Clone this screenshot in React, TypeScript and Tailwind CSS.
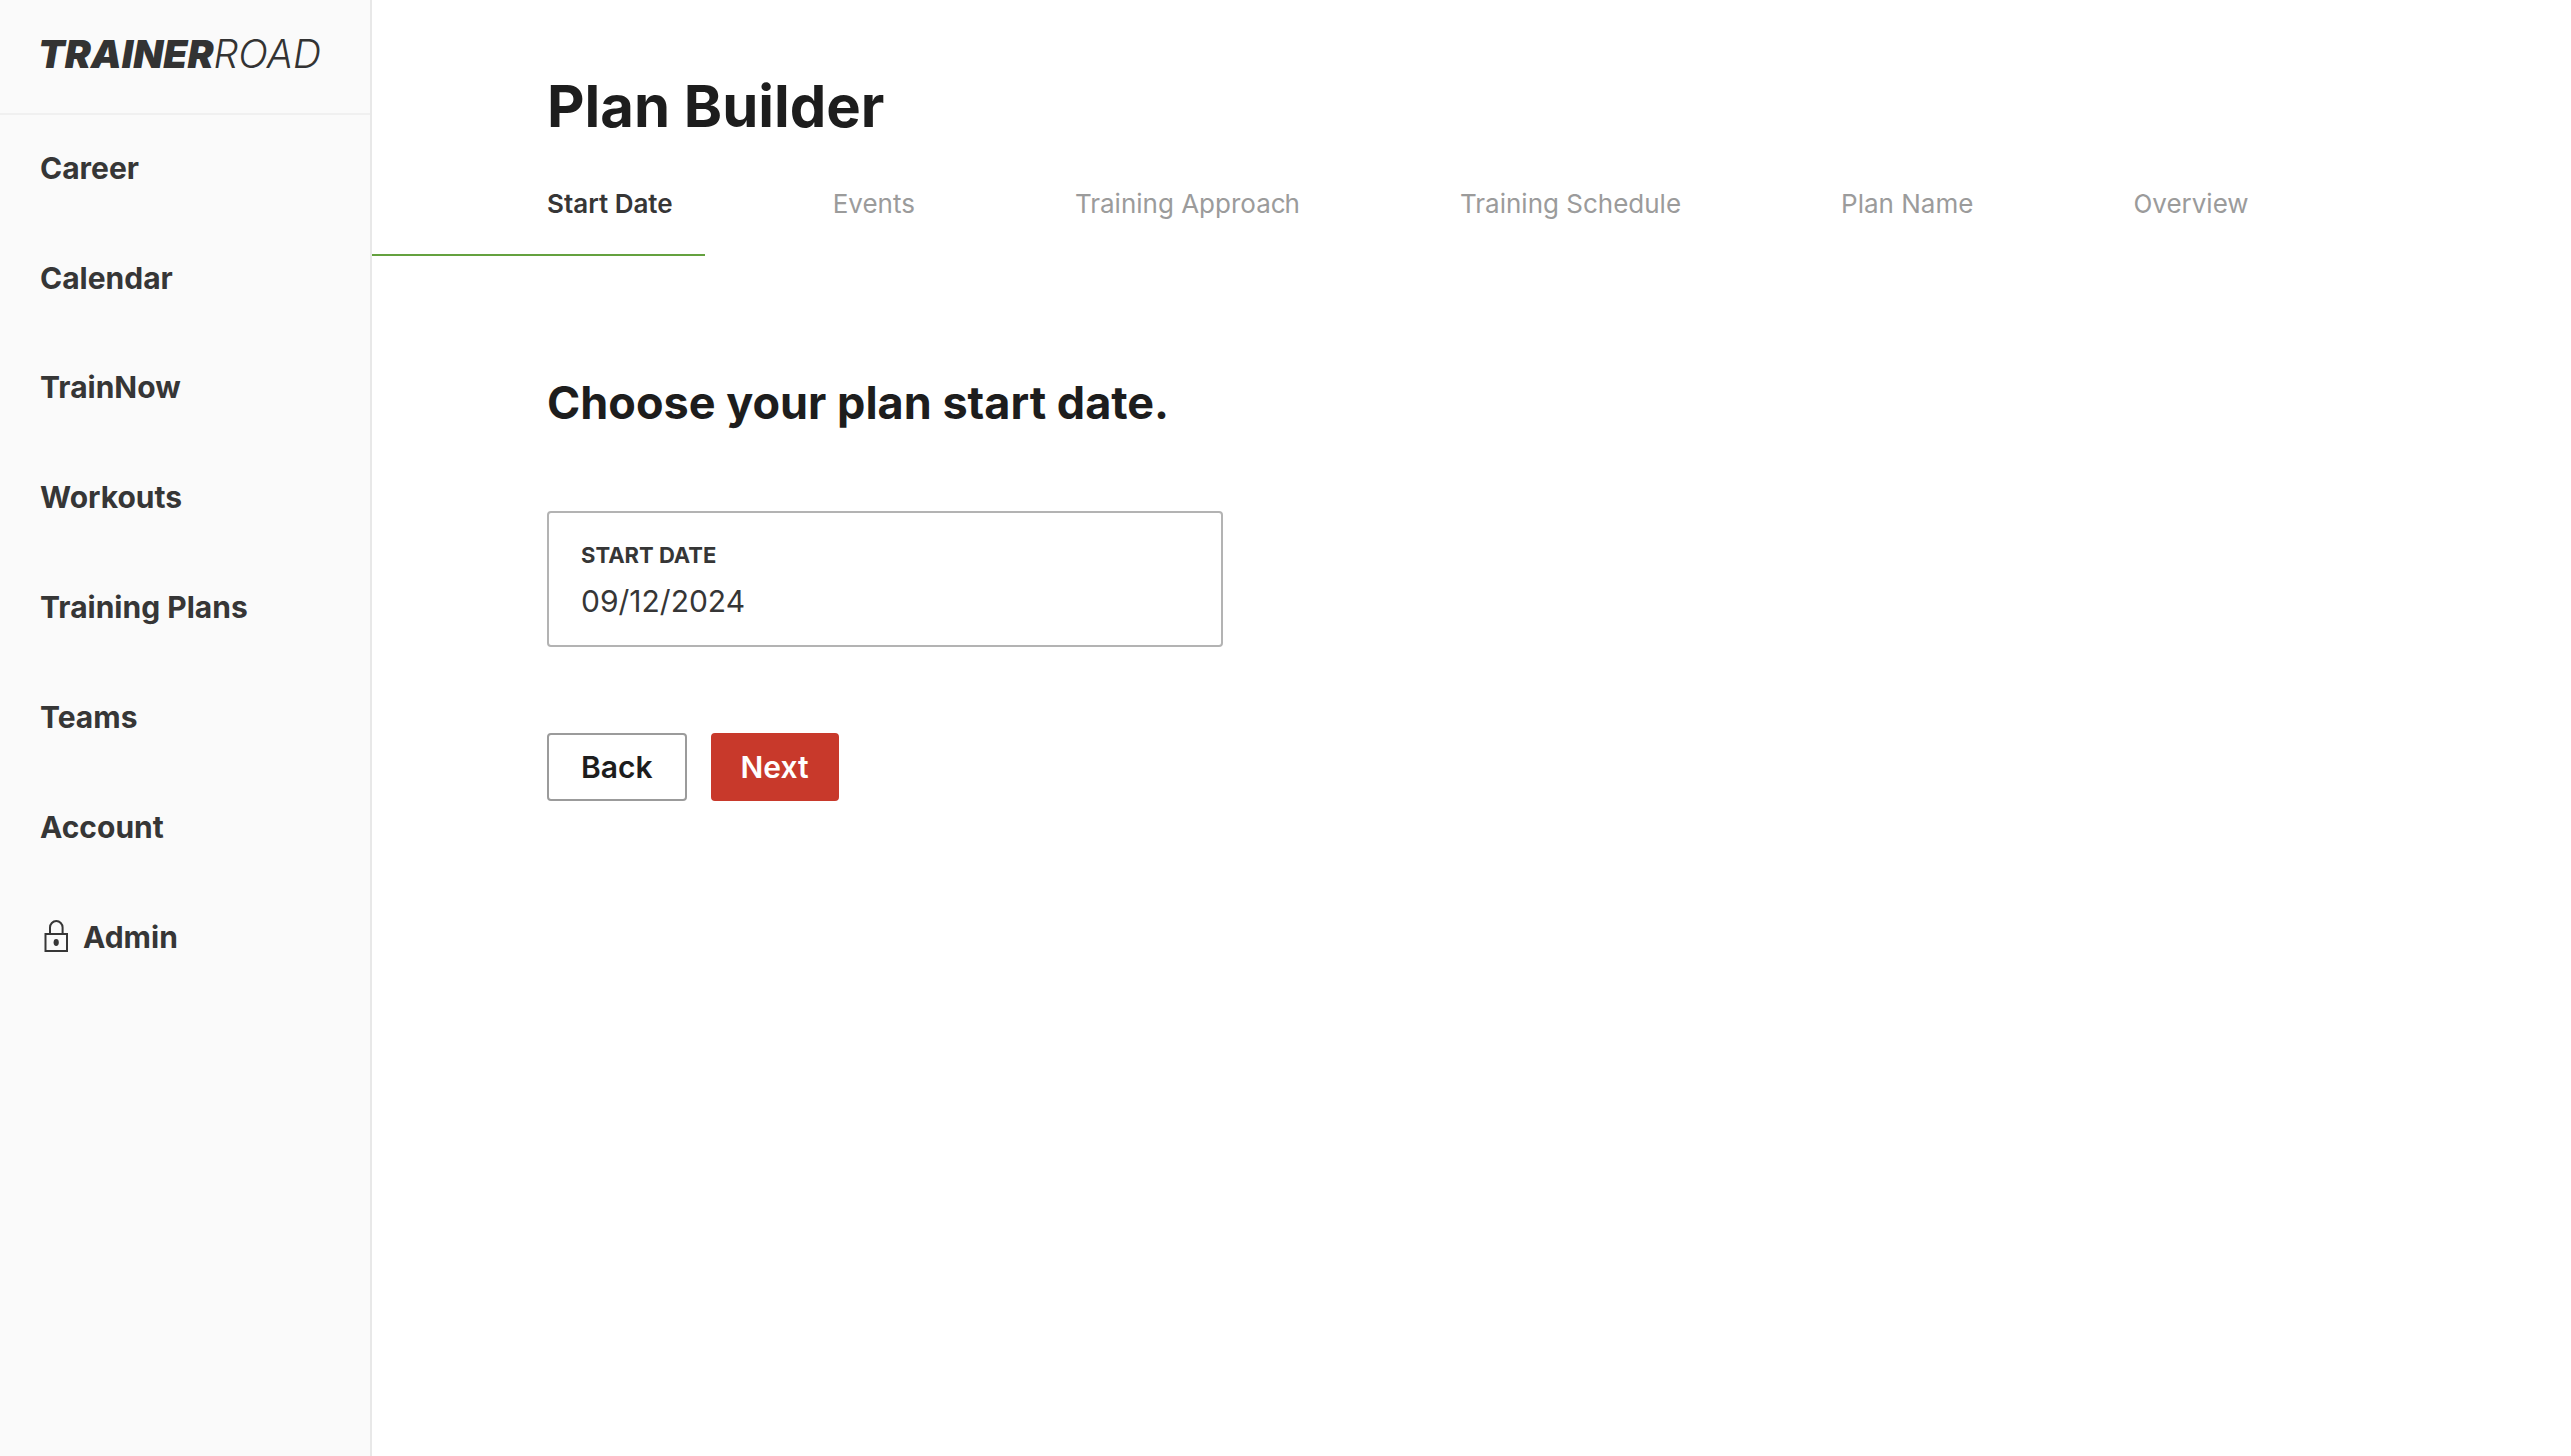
import { useState } from "react";

const links = [
  "Career",
  "Calendar",
  "TrainNow",
  "Workouts",
  "Training Plans",
  "Teams",
  "Account",
];

const steps = [
  "Start Date",
  "Events",
  "Training Approach",
  "Training Schedule",
  "Plan Name",
  "Overview",
];

function LockIcon() {
  return (
    <svg width="32" height="34" viewBox="0 0 32 34" fill="none" stroke="currentColor" strokeWidth="2" aria-hidden="true">
      <path d="M10 14V7.4a6.3 6.3 0 0 1 12.6 0V14" />
      <rect x="5.5" y="14" width="21.5" height="17" />
      <ellipse cx="16.2" cy="22.5" rx="2.6" ry="3.4" fill="currentColor" stroke="none" />
    </svg>
  );
}

function Sidebar() {
  return (
    <aside className="w-[372px] shrink-0 border-r-2 border-[#e8e8e8] bg-[#fafafa] text-[#363636]">
      <div className="flex h-[115px] border-b-2 border-[#f0f0f0] pt-7 pl-[38px]">
        <a href="#" className="text-[39px] leading-[52px] italic text-[#333333]">
          <span className="font-black">TRAINER</span>
          <span className="font-light">ROAD</span>
        </a>
      </div>
      <nav className="-mt-0.5 text-[30px] leading-10 font-bold">
        {links.map((link) => (
          <a key={link} href="#" className="flex h-[110px] items-center pl-10">
            {link}
          </a>
        ))}
        <a href="#" className="flex h-[110px] items-center gap-[11px] pl-10">
          <LockIcon />
          Admin
        </a>
      </nav>
    </aside>
  );
}

export default function App() {
  const [step, setStep] = useState("Start Date");
  const [startDate, setStartDate] = useState("09/12/2024");

  return (
    <div className="flex min-h-screen bg-white font-['Inter',sans-serif]">
      <Sidebar />
      <main className="min-w-0 flex-1 text-[#1d1d1d]">
        <h1 className="pt-[74px] pl-44 text-[58px] leading-[64px] font-bold">Plan Builder</h1>
        <div className="mt-[46px] flex gap-40 pb-[30px] pl-44 text-[26px] leading-10">
          {steps.map((name) => (
            <button
              key={name}
              type="button"
              onClick={() => setStep(name)}
              className={name === step ? "font-semibold text-[#363636]" : "text-[#9b9b9b]"}
            >
              {name}
            </button>
          ))}
        </div>
        <div className="h-0.5 w-[334px] bg-[#64a13f]" />

        <form className="pt-[120px] pl-44" onSubmit={(e) => e.preventDefault()}>
          <h2 className="text-[45px] leading-[56px] font-bold">Choose your plan start date.</h2>
          <div className="mt-20 w-full max-w-[676px] rounded border-2 border-[#b3b3b3] px-8 pt-7 pb-6 text-[#363636]">
            <label htmlFor="startDate" className="block text-[22px] leading-7 font-bold">
              START DATE
            </label>
            <input
              id="startDate"
              type="text"
              value={startDate}
              onChange={(e) => setStartDate(e.target.value)}
              className="mt-3 block h-10 w-full text-[30px] leading-10 outline-none"
            />
          </div>
          <div className="mt-[86px] flex gap-6 text-[30px] leading-10 font-semibold">
            <button type="button" className="rounded border-2 border-[#9b9b9b] px-8 py-3">
              Back
            </button>
            <button type="submit" className="rounded border-2 border-[#c8392b] bg-[#c8392b] px-7 py-3 text-white">
              Next
            </button>
          </div>
        </form>
      </main>
    </div>
  );
}
